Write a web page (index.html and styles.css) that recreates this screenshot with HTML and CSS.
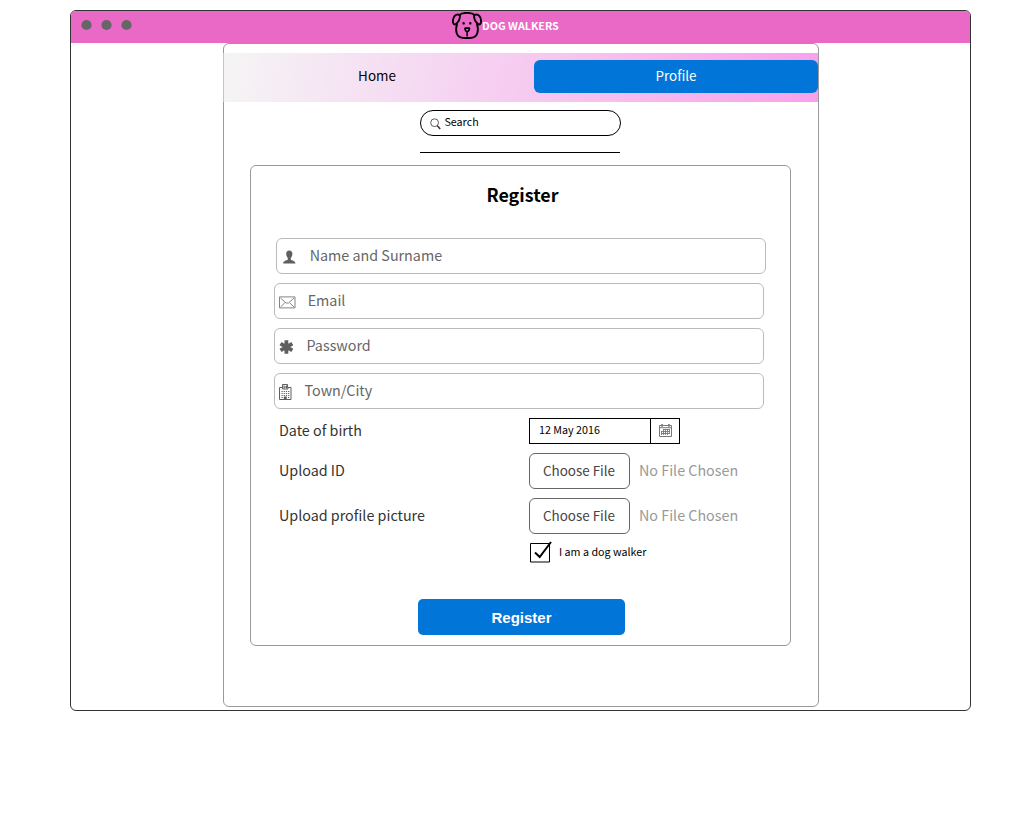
FILE: index.html
```html
<!DOCTYPE html>
<html lang="en">
<head>
<meta charset="utf-8">
<title>Dog Walkers</title>
<link rel="stylesheet" href="styles.css">
</head>
<body>
<div class="window">
  <header class="titlebar">
    <div class="dots">
      <svg width="60" height="12" viewBox="0 0 60 12" fill="#666"><circle cx="5.500" cy="6" r="5.100"/><circle cx="25.500" cy="6" r="5.100"/><circle cx="45.500" cy="6" r="5.100"/></svg>
    </div>
    <svg class="logo" width="30" height="28" viewBox="0 0 30 28" fill="none" stroke="#000" stroke-width="1.9" stroke-linecap="round" stroke-linejoin="round">
      <path d="M7.5 3C9.500 1 12 .9 15 .9s5.500.1 7.500 2.100"/>
      <path d="M7.500 2.800C3.500 1.300.9 5 .9 9.500c0 2 1.300 3.700 3 2.500C6.500 10 8 6.500 8 3.200M22.500 2.800c4-1.500 6.600 2.200 6.600 6.700 0 2-1.300 3.700-3 2.500C23.500 10 22 6.500 22 3.200"/>
      <path d="M5 12C3.200 18 3.600 26 12 26h6c8.400 0 8.800-8 7-14"/>
      <path d="M13.200 16.200h4c.9.900-.8 3.300-2 3.300s-2.900-2.400-2-3.300z" stroke-width="1.700"/>
      <path d="M15.100 20V24" stroke-width="1.500"/>
      <path d="M11.600 11.300v.1M18.300 11.300v.1" stroke-width="2.400"/>
    </svg>
    <span class="brand">DOG WALKERS</span>
  </header>
  <main class="screen">
    <nav class="nav">
      <a class="tab">Home</a>
      <a class="tab tab-active">Profile</a>
    </nav>
    <div class="search">
      <svg width="11" height="12" viewBox="0 0 11 12" fill="none" stroke="#333"><circle cx="4.600" cy="4.700" r="3.900" stroke-width=".8"/><path d="M7.300 7.800l2.900 3.200" stroke-width="1.500"/></svg>
      <span>Search</span>
    </div>
    <div class="rule"></div>
    <section class="card">
      <h1 class="heading">Register</h1>
      <div class="field field-name">
        <svg width="14" height="14" viewBox="-.3 0 14 14" fill="#5f5f5f"><path d="M7 .5C4.800.5 3.800 2 3.900 4c.1 1.800.8 3 1.600 3.900v1.600C4.500 10.700 1.200 10.400.8 13.500h12.400c-.4-3.100-3.700-2.800-4.700-4V7.900c.8-.9 1.500-2.100 1.600-3.900C10.200 2 9.200.5 7 .5z"/></svg>
        <span>Name and Surname</span>
      </div>
      <div class="field field-email">
        <svg width="17" height="13" viewBox="0 0 17 13" fill="none" stroke="#777" stroke-width=".9"><path d="M.5.9h15.500v11H.5z"/><path d="M1.500 2l5.500 5h2.500L15 2M1.500 11l4.300-4.200M15 11l-4.300-4.200"/></svg>
        <span>Email</span>
      </div>
      <div class="field field-password">
        <svg width="14" height="14" viewBox="-.4 0 14 14" stroke="#5f5f5f" stroke-width="3.800"><path d="M7 .2v13.600M1.100 3.600l11.800 6.800M1.100 10.400l11.800-6.800"/></svg>
        <span>Password</span>
      </div>
      <div class="field field-town">
        <svg width="13" height="16" viewBox="0 0 13 16" fill="none" stroke="#5f5f5f"><path d="M.5 3.500h3v-3h5v3h3.500v12H.5zM5 1.500v3M7.500 1.500v3M5 3h2.500M3.500 3.500v1.500h5.500V3.500"/><path d="M2.500 7.500h8M2.500 9.500h8M2.500 11.500h8M2.500 13.500h1.500M9 13.500h1.500" stroke-width="1.100" stroke-dasharray="1.200 1"/><path d="M4.800 15v-2.500h3V15z" fill="#5f5f5f" stroke="none"/></svg>
        <span>Town/City</span>
      </div>
      <div class="row row-date">
        <label class="label">Date of birth</label>
        <div class="date">
          <span class="date-value">12 May 2016</span>
          <span class="date-button">
            <svg width="13" height="13" viewBox="0 0 13 13" fill="none" stroke="#777"><path d="M.5 1.500h12v11H.5z"/><path d="M.5 3.700h12"/><path d="M3 0v2.700M10 0v2.700" stroke-width="1.600"/><path d="M4 5.500h7M2 7.500h9M2 9.500h9M2.500 7v4M4.500 5v6M6.500 5v6M8.500 5v6M10.500 5v5" stroke-width=".9"/></svg>
          </span>
        </div>
      </div>
      <div class="row">
        <label class="label">Upload ID</label>
        <button class="choose">Choose File</button>
        <span class="empty">No File Chosen</span>
      </div>
      <div class="row">
        <label class="label">Upload profile picture</label>
        <button class="choose">Choose File</button>
        <span class="empty">No File Chosen</span>
      </div>
      <div class="check">
        <svg width="22" height="22" viewBox="0 0 22 22" fill="none" stroke="#000"><path d="M.5 2.500h19v18.500H.5z"/><path d="M5 11.500l4.700 4.500L21 1" stroke-width="2"/></svg>
        <span>I am a dog walker</span>
      </div>
      <button class="submit">Register</button>
    </section>
  </main>
</div>
</body>
</html>
```
FILE: styles.css
```css
* { box-sizing: border-box; }
body {
  margin: 0;
  padding: 10px 0 0 70px;
  background: #fff;
  color: #000;
  font-family: "Noto Sans CJK SC", "Noto Sans", sans-serif;
}
button { font-family: inherit; padding: 0; }
svg { display: block; flex: none; }
.window {
  width: 901px;
  height: 701px;
  border: 1px solid #333;
  border-radius: 6px;
  overflow: hidden;
}
.titlebar {
  display: flex;
  height: 32px;
  padding-left: 10px;
  background: #ea69c6;
}
.dots { width: 371px; padding-top: 8px; }
.logo { margin-top: 1px; }
.brand { color: #fff; font-size: 10.74px; font-weight: 700; line-height: 29px; white-space: nowrap; }
.screen {
  width: 596px;
  height: 664px;
  margin-left: 152px;
  border: 1px solid #999;
  border-radius: 6px;
}
.nav {
  display: flex;
  align-items: flex-start;
  height: 49px;
  margin: 9px 0 0 -1px;
  padding-top: 7px;
  border-left: 1px solid #c5c5c5;
  background: linear-gradient(98deg, #f5f5f5, #f7a1ec);
}
.tab {
  flex: none;
  width: 310px;
  padding-right: 4px;
  text-align: center;
  font-size: 13.43px;
  line-height: 31px;
}
.tab-active { width: 284px; height: 33px; padding: 0; border-radius: 6px; background: #0275d8; color: #fff; }
.search {
  display: flex;
  gap: 3px;
  width: 201px;
  height: 26px;
  margin: 8px 0 0 196px;
  padding-left: 9.4px;
  border: 1px solid #000;
  border-radius: 13px;
  font-size: 10.74px;
  line-height: 21px;
}
.search svg { margin-top: 7px; }
.rule { width: 200px; height: 1px; margin: 16px 0 12px 196px; background: #000; }
.card {
  width: 541px;
  height: 481px;
  margin-left: 26px;
  padding-left: 23px;
  border: 1px solid #999;
  border-radius: 6px;
}
.heading { width: 497px; height: 72px; margin: 0; padding-top: 13px; text-align: center; font-size: 17.9px; font-weight: 700; line-height: 30px; }
.field {
  display: flex;
  align-items: center;
  width: 490px;
  height: 36px;
  margin-bottom: 9px;
  padding-left: 4px;
  border: 1px solid #bbb;
  border-radius: 6px;
  color: #666;
  font-size: 14.32px;
  line-height: 34px;
}
.field span { margin-top: -3px; }
.field-name { margin-left: 2px; padding-left: 5px; }
.field-name svg { margin: 2px 13.700px 0 0; }
.field-email svg { margin: 3px 11.700px 0 0; }
.field-password svg { margin: 2px 13.500px 0 0; }
.field-town svg { margin: 2px 12.500px 0 0; }
.row { display: flex; height: 36px; margin-bottom: 9px; line-height: 33px; font-size: 14.32px; }
.row-date { height: 26px; line-height: 23px; }
.label { width: 255px; padding-left: 5px; color: #333; }
.date { display: flex; width: 151px; border: 1px solid #000; font-size: 10.74px; line-height: 22px; }
.date-value { width: 121px; padding-left: 9px; }
.date-button { display: flex; align-items: flex-start; justify-content: center; width: 29px; padding-top: 5px; border-left: 1px solid #000; }
.choose { width: 101px; padding: 0 1px 2px 0; border: 1px solid #666; border-radius: 6px; background: #fff; color: #444; font-size: 13.43px; line-height: 32px; }
.empty { margin-left: 9px; color: #999; }
.check { display: flex; gap: 7px; height: 22px; margin: -2px 0 36px 256px; font-size: 10.74px; line-height: 21px; }
.submit { display: block; width: 207px; height: 36px; margin-left: 144px; border: 0; border-radius: 5px; background: #0275d8; color: #fff; font: bold 15px "Liberation Sans", Arial, sans-serif; }
```
